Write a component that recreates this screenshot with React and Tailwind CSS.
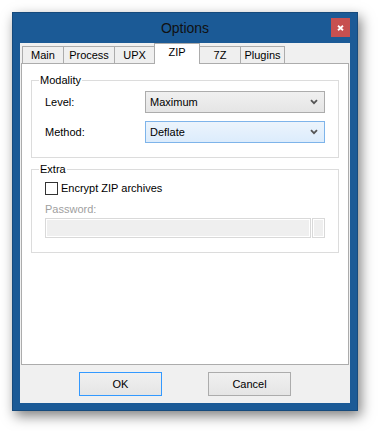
import React from "react";

const font = { fontFamily: '"Liberation Sans", Arial, sans-serif' };

function Chevron() {
  return (
    <svg width="8" height="6" viewBox="0 0 8 6" className="shrink-0">
      <path d="M1 1.2 L4 4.2 L7 1.2" fill="none" stroke="#555" strokeWidth="1.8" />
    </svg>
  );
}

function Combo({ value, focused }) {
  return (
    <div
      className={
        "w-[180px] h-[22px] flex items-center justify-between pl-[4px] pr-[6px] border text-[11px] text-black " +
        (focused
          ? "border-[#7eb4ea] bg-gradient-to-b from-[#ecf4fc] to-[#dcecfc]"
          : "border-[#acacac] bg-gradient-to-b from-[#f0f0f0] to-[#e5e5e5]")
      }
    >
      <span>{value}</span>
      <Chevron />
    </div>
  );
}

function Group({ title, className, children }) {
  return (
    <div className={"relative border border-[#dcdcdc] " + className}>
      <span className="absolute -top-[8px] left-[7px] bg-white px-[1px] text-[11px] leading-[14px] text-black">
        {title}
      </span>
      {children}
    </div>
  );
}

const tabs = [
  { label: "Main", w: "w-[42px]" },
  { label: "Process", w: "w-[52px]" },
  { label: "UPX", w: "w-[41px]" },
  { label: "ZIP", w: "w-[46px]", active: true },
  { label: "7Z", w: "w-[42px]" },
  { label: "Plugins", w: "w-[45px]" },
];

export default function App() {
  return (
    <div className="w-[378px] h-[431px] bg-white pt-[12px] pl-[12px]" style={font}>
      <div className="w-[346px] h-[399px] bg-[#1b5a96] border border-[#164a7c] shadow-[3px_5px_12px_rgba(0,0,0,0.5)] flex flex-col">
        {/* title bar */}
        <div className="h-[30px] relative flex items-center justify-center">
          <span className="text-[14px] text-[#111] pt-[1px]">Options</span>
          <div className="absolute top-[5px] right-[7px] w-[19px] h-[19px] bg-[#c75050] flex items-center justify-center">
            <svg width="7" height="6" viewBox="0 0 7 6">
              <path d="M1 0.8 L6 5.2 M6 0.8 L1 5.2" stroke="#fff" strokeWidth="1.8" />
            </svg>
          </div>
        </div>

        {/* client */}
        <div className="mx-[7px] w-[330px] h-[360px] bg-[#f0f0f0] flex flex-col">
          <div className="h-[20px] flex items-end pl-[2px] relative z-10">
            {tabs.map((t, i) =>
              t.active ? (
                <div
                  key={t.label}
                  className={t.w + " h-[21px] -mb-px -ml-px bg-white border-t border-l border-r border-[#acacac] flex items-center justify-center pb-[3px] text-[11px] text-black"}
                >
                  {t.label}
                </div>
              ) : (
                <div
                  key={t.label}
                  className={t.w + " h-[17px] " + (i > 0 ? "-ml-px " : "") + "bg-[#efefef] border-t border-l border-r border-[#acacac] flex items-center justify-center text-[11px] text-black"}
                >
                  {t.label}
                </div>
              )
            )}
          </div>

          <div className="ml-px w-[328px] h-[302px] bg-white border border-[#acacac] pl-[9px] pt-[16px]">
            <Group title="Modality" className="w-[308px] h-[78px] pt-[10px]">
              <div className="flex items-center h-[22px]">
                <div className="w-[113px] pl-[13px] text-[11px] text-black">Level:</div>
                <Combo value="Maximum" />
              </div>
              <div className="flex items-center h-[22px] mt-[8px]">
                <div className="w-[113px] pl-[13px] text-[11px] text-black">Method:</div>
                <Combo value="Deflate" focused />
              </div>
            </Group>

            <Group title="Extra" className="w-[308px] h-[84px] mt-[11px] pt-[12px] pl-[13px]">
              <div className="flex items-center h-[13px]">
                <div className="w-[13px] h-[13px] border border-[#333] bg-white" />
                <span className="ml-[3px] text-[11px] text-black leading-[13px]">Encrypt ZIP archives</span>
              </div>
              <div className="mt-[7px] h-[15px] text-[11px] leading-[15px] text-[#a0a0a0]">Password:</div>
              <div className="mt-[1px] flex gap-[1px]">
                <div className="w-[266px] h-[20px] border border-[#d9d9d9] bg-[#efefef] shadow-[inset_0_0_0_1px_#ffffff]" />
                <div className="w-[13px] h-[20px] border border-[#d9d9d9] bg-[#efefef] shadow-[inset_0_0_0_1px_#ffffff]" />
              </div>
            </Group>
          </div>

          <div className="flex pl-[59px] gap-[46px] mt-[7px]">
            <button className="w-[83px] h-[24px] border border-[#3399ff] bg-gradient-to-b from-[#f0f0f0] to-[#e5e5e5] text-[11px] text-black">
              OK
            </button>
            <button className="w-[83px] h-[24px] border border-[#acacac] bg-gradient-to-b from-[#f0f0f0] to-[#e5e5e5] text-[11px] text-black">
              Cancel
            </button>
          </div>
        </div>
      </div>
    </div>
  );
}
